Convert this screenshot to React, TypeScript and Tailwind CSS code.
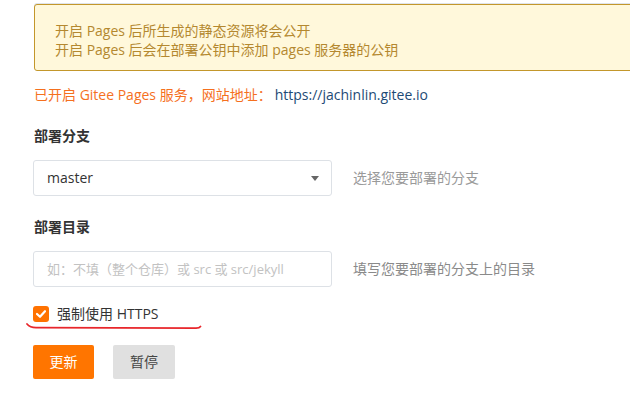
import React from "react";

const font = { fontFamily: '"Open Sans", "Noto Sans CJK SC", sans-serif' };

export default function App() {
  return (
    <div
      className="relative w-[630px] h-[396px] overflow-hidden bg-white text-[14px] leading-[20px]"
      style={font}
    >
      <div className="pt-[4px] pl-[34px]">
        {/* notice */}
        <div className="w-[620px] border border-[#c3972b] rounded-[3px] bg-[#fff8db] shadow-[0_-1px_0_#dfe4ea] pt-[16px] pb-[11px] pl-[20px] text-[#b4882f] leading-[19px]">
          <div>开启 Pages 后所生成的静态资源将会公开</div>
          <div>开启 Pages 后会在部署公钥中添加 pages 服务器的公钥</div>
        </div>

        {/* gitee line */}
        <div className="mt-[14px] flex items-center">
          <span className="text-[#f5701e]">已开启 Gitee Pages 服务，网站地址：</span>
          <span className="ml-[3px] text-[#1d4a75]">https://jachinlin.gitee.io</span>
        </div>

        {/* branch */}
        <div className="mt-[21px] font-bold text-[#333333]">部署分支</div>
        <div className="mt-[14px] flex items-center">
          <div className="w-[299px] h-[36px] -ml-[1px] border border-[#dde1e6] rounded-[3px] flex items-center justify-between pl-[13px] pr-[12px] text-[#333333]">
            <span>master</span>
            <svg width="8" height="5" viewBox="0 0 8 5">
              <path d="M0 0 L8 0 L4 5 Z" fill="#666666" />
            </svg>
          </div>
          <span className="ml-[21px] text-[#9a9a9a]">选择您要部署的分支</span>
        </div>

        {/* directory */}
        <div className="mt-[21px] font-bold text-[#333333]">部署目录</div>
        <div className="mt-[14px] flex items-center">
          <div className="w-[299px] h-[36px] -ml-[1px] border border-[#dde1e6] rounded-[3px] flex items-center pl-[13px] text-[13px] text-[#c2c2c2]">
            如：不填（整个仓库）或 src 或 src/jekyll
          </div>
          <span className="ml-[21px] text-[#8a8a8a]">填写您要部署的分支上的目录</span>
        </div>

        {/* checkbox */}
        <div className="mt-[19px] flex items-center h-[16px]">
          <div className="w-[16px] h-[16px] -ml-[1px] rounded-[3px] bg-[#ff7200] flex items-center justify-center">
            <svg width="10" height="8" viewBox="0 0 10 8">
              <path d="M1 4 L4 6.8 L9 1.2" fill="none" stroke="#ffffff" strokeWidth="2.2" strokeLinecap="round" strokeLinejoin="round" />
            </svg>
          </div>
          <span className="ml-[8px] text-[#333333]">强制使用 HTTPS</span>
        </div>

        {/* buttons */}
        <div className="mt-[23px] flex items-center gap-[19px]">
          <button className="w-[61px] h-[34px] -ml-[1px] rounded-[2px] bg-[#ff7500] text-white">更新</button>
          <button className="w-[62px] h-[34px] rounded-[2px] bg-[#e0e0e0] text-[#444444]">暂停</button>
        </div>
      </div>

      {/* red hand-drawn underline */}
      <svg className="absolute left-0 top-0 pointer-events-none" width="630" height="396">
        <path
          d="M27 324 Q30 327.5 36 327.6 L196 328.2 Q199.5 328 200.5 326.5"
          fill="none"
          stroke="#e8262b"
          strokeWidth="1.8"
          strokeLinecap="round"
        />
      </svg>
    </div>
  );
}
